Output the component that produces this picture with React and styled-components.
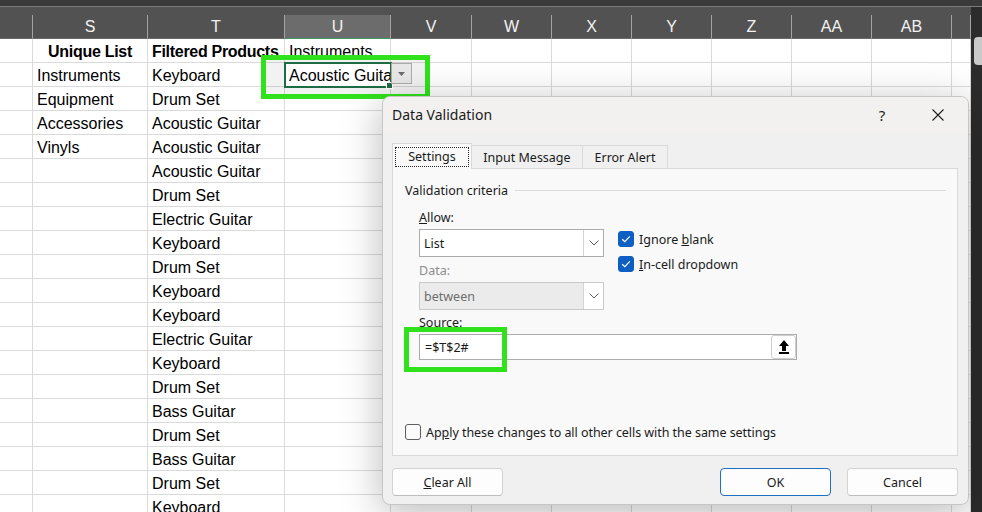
import styled, { createGlobalStyle } from "styled-components";

const COLUMNS = [
  { w: 33, label: "" },
  { w: 115, label: "S" },
  { w: 137, label: "T" },
  { w: 106, label: "U", active: true },
  { w: 81, label: "V" },
  { w: 80, label: "W" },
  { w: 80, label: "X" },
  { w: 80, label: "Y" },
  { w: 80, label: "Z" },
  { w: 80, label: "AA" },
  { w: 80, label: "AB" },
  { w: 19, label: "" },
];

const ROWS = [
  ["Unique List", "Filtered Products", "Instruments"],
  ["Instruments", "Keyboard", "Acoustic Guitar"],
  ["Equipment", "Drum Set", ""],
  ["Accessories", "Acoustic Guitar", ""],
  ["Vinyls", "Acoustic Guitar", ""],
  ["", "Acoustic Guitar", ""],
  ["", "Drum Set", ""],
  ["", "Electric Guitar", ""],
  ["", "Keyboard", ""],
  ["", "Drum Set", ""],
  ["", "Keyboard", ""],
  ["", "Keyboard", ""],
  ["", "Electric Guitar", ""],
  ["", "Keyboard", ""],
  ["", "Drum Set", ""],
  ["", "Bass Guitar", ""],
  ["", "Drum Set", ""],
  ["", "Bass Guitar", ""],
  ["", "Drum Set", ""],
  ["", "Keyboard", ""],
];

const GlobalStyle = createGlobalStyle`
  * { box-sizing: border-box; }
  body {
    margin: 0;
    overflow: hidden;
    background: #fff;
  }
`;

export default function App() {
  return (
    <>
      <GlobalStyle />
      <Page>
        <TopBand />
        <Workspace>
          <Sheet>
            <HeaderRow>
              {COLUMNS.map((c, i) => (
                <HeaderCell key={i} $w={c.w} $active={c.active}>
                  {c.label}
                </HeaderCell>
              ))}
            </HeaderRow>
            {ROWS.map((row, r) => (
              <Row key={r}>
                {COLUMNS.map((c, i) => {
                  let text = "";
                  if (i >= 1 && i <= 3) text = row[i - 1];
                  const bold = r === 0 && (i === 1 || i === 2);
                  return (
                    <Cell
                      key={i}
                      $w={c.w}
                      $bold={bold}
                      $center={r === 0 && i === 1}
                      $selected={r === 1 && i === 3}
                    >
                      {text}
                    </Cell>
                  );
                })}
              </Row>
            ))}
          </Sheet>
          <SideStrip>
            <StripThumb />
          </SideStrip>
        </Workspace>

        <Highlight style={{ left: 261, top: 55, width: 169, height: 44 }} $fill />
        <CellDrop>
          <svg width="7" height="4" viewBox="0 0 7 4">
            <path d="M0 0 L7 0 L3.5 4 Z" fill="#6b6b6b" />
          </svg>
        </CellDrop>

        <Dialog>
          <TitleBar>
            <Title>Data Validation</Title>
            <HelpBtn>?</HelpBtn>
            <CloseBtn>
              <svg width="12" height="12" viewBox="0 0 12 12">
                <path d="M0.5 0.5 L11.5 11.5 M11.5 0.5 L0.5 11.5" stroke="#1f1f1f" strokeWidth="1.1" />
              </svg>
            </CloseBtn>
          </TitleBar>
          <Body>
            <Tabs>
              <Tab $w={80} $active>Settings</Tab>
              <Tab $w={112}>Input Message</Tab>
              <Tab $w={86}>Error Alert</Tab>
            </Tabs>
            <Panel>
              <GroupHeader>Validation criteria</GroupHeader>
              <Criteria>
                <LeftCol>
                  <Label>
                    <u>A</u>llow:
                  </Label>
                  <Select>
                    <SelectText>List</SelectText>
                    <Chevron />
                  </Select>
                  <Label $disabled $gap={6}>Data:</Label>
                  <Select $disabled>
                    <SelectText>between</SelectText>
                    <Chevron />
                  </Select>
                </LeftCol>
                <RightCol>
                  <CheckRow>
                    <CheckBox $checked>
                      <CheckMark />
                    </CheckBox>
                    <span>
                      Ignore <u>b</u>lank
                    </span>
                  </CheckRow>
                  <CheckRow>
                    <CheckBox $checked>
                      <CheckMark />
                    </CheckBox>
                    <span>
                      <u>I</u>n-cell dropdown
                    </span>
                  </CheckRow>
                </RightCol>
              </Criteria>
              <SourceBlock>
                <Label $gap={5}>Source:</Label>
                <SourceInput>
                  <SelectText>=$T$2#</SelectText>
                  <CollapseBtn>
                    <svg width="10" height="14" viewBox="0 0 10 14">
                      <path d="M5 0 L10 6 L7 6 L7 11 L3 11 L3 6 L0 6 Z" fill="#000" />
                      <rect x="0" y="12" width="10" height="2" fill="#000" />
                    </svg>
                  </CollapseBtn>
                </SourceInput>
              </SourceBlock>
              <ApplyRow>
                <CheckBox />
                <span>
                  Ap<u>p</u>ly these changes to all other cells with the same settings
                </span>
              </ApplyRow>
            </Panel>
            <Footer>
              <Button>
                <u>C</u>lear All
              </Button>
              <ButtonGroup>
                <Button $primary>OK</Button>
                <Button>Cancel</Button>
              </ButtonGroup>
            </Footer>
          </Body>
          <Highlight style={{ left: 21, top: 230, width: 103, height: 45 }} />
        </Dialog>
      </Page>
    </>
  );
}

function Chevron() {
  return (
    <ChevronBox>
      <svg width="10" height="6" viewBox="0 0 10 6">
        <path d="M0.5 0.5 L5 5 L9.5 0.5" stroke="#5c5c5c" strokeWidth="1" fill="none" />
      </svg>
    </ChevronBox>
  );
}

function CheckMark() {
  return (
    <svg width="10" height="8" viewBox="0 0 10 8">
      <path d="M1.2 4.2 L3.8 6.6 L8.8 1.4" stroke="#fff" strokeWidth="1.2" fill="none" />
    </svg>
  );
}

const Page = styled.div`
  position: relative;
  width: 982px;
  height: 512px;
  overflow: hidden;
  background: #fff;
`;

const TopBand = styled.div`
  height: 7px;
  background: #3a3a3a;
  border-bottom: 1px solid #7c7c7c;
`;

const Workspace = styled.div`
  display: flex;
`;

const Sheet = styled.div`
  width: 971px;
  font-family: "Liberation Sans", Arial, sans-serif;
`;

const HeaderRow = styled.div`
  display: flex;
  height: 32px;
  background: #525252;
`;

const HeaderCell = styled.div`
  position: relative;
  width: ${(p) => p.$w}px;
  flex: none;
  margin-top: 8px;
  display: flex;
  align-items: center;
  justify-content: center;
  color: #f2f2f2;
  font-size: 16px;
  border-right: 1px solid #a3a3a3;
  background: ${(p) => (p.$active ? "#6c6c6c" : "transparent")};
  border-bottom: 1px solid ${(p) => (p.$active ? "#3f9a63" : "#6a6a6a")};
`;

const Row = styled.div`
  display: flex;
  height: 24px;
`;

const Cell = styled.div`
  position: relative;
  width: ${(p) => p.$w}px;
  flex: none;
  height: 24px;
  padding: 3px 4px 0;
  border-right: 1px solid #dadada;
  border-bottom: 1px solid #dadada;
  font-size: 16px;
  line-height: 20px;
  color: #000;
  white-space: nowrap;
  overflow: hidden;
  font-weight: ${(p) => (p.$bold ? 700 : 400)};
  letter-spacing: ${(p) => (p.$bold ? "-0.3px" : "0")};
  text-align: ${(p) => (p.$center ? "center" : "left")};
  ${(p) =>
    p.$selected &&
    `
    z-index: 3;
    overflow: visible;
    background: #fff;
    outline: 2px solid #1f6b43;
    outline-offset: -1px;
    &::after {
      content: "";
      position: absolute;
      right: -3px;
      bottom: -3px;
      width: 5px;
      height: 5px;
      background: #1f6b43;
      border: 1px solid #fff;
    }
  `}
`;

const SideStrip = styled.div`
  flex: 1;
  height: 505px;
  background: #2c2c2c;
  padding: 10px 0 0 3px;
`;

const StripThumb = styled.div`
  height: 28px;
  margin-top: 20px;
  border-radius: 4px 0 0 4px;
  background: #c9c9c9;
`;

const Highlight = styled.div`
  position: absolute;
  z-index: ${(p) => (p.$fill ? 2 : 5)};
  border: 5px solid #2fe21c;
  background: ${(p) => (p.$fill ? "rgba(0,0,0,0.05)" : "transparent")};
  pointer-events: none;
`;

const CellDrop = styled.div`
  position: absolute;
  z-index: 4;
  left: 391px;
  top: 63px;
  width: 21px;
  height: 21px;
  display: flex;
  align-items: center;
  justify-content: center;
  background: #e8e8e8;
  border: 1px solid #acacac;
`;

const Dialog = styled.div`
  position: absolute;
  z-index: 6;
  left: 382px;
  top: 96px;
  width: 587px;
  height: 409px;
  border: 1px solid #c6c6c6;
  border-radius: 8px;
  overflow: hidden;
  background: #f0f0f0;
  box-shadow: 0 8px 40px rgba(0, 0, 0, 0.28);
  font-family: "Noto Sans", "Open Sans", sans-serif;
  font-size: 12.5px;
  color: #1a1a1a;
`;

const TitleBar = styled.div`
  height: 37px;
  display: flex;
  align-items: center;
  padding: 0 0 2px 9px;
  background: #f3f1ef;
`;

const Title = styled.div`
  flex: 1;
  font-size: 14px;
  color: #1a1a1a;
`;

const HelpBtn = styled.div`
  width: 20px;
  margin-right: 23px;
  text-align: center;
  font-size: 15px;
  color: #222;
`;

const CloseBtn = styled.div`
  width: 46px;
  margin-right: 7px;
  display: flex;
  justify-content: center;
`;

const Body = styled.div`
  padding: 9px 10px 0 9px;
`;

const Tabs = styled.div`
  display: flex;
  align-items: flex-end;
  height: 25px;
`;

const Tab = styled.div`
  position: relative;
  z-index: ${(p) => (p.$active ? 2 : 1)};
  width: ${(p) => p.$w}px;
  height: ${(p) => (p.$active ? 26 : 23)}px;
  margin-bottom: ${(p) => (p.$active ? -1 : 0)}px;
  margin-left: ${(p) => (p.$active ? 0 : -1)}px;
  display: flex;
  align-items: center;
  justify-content: center;
  padding-bottom: ${(p) => (p.$active ? 1 : 0)}px;
  border: 1px solid #d9d9d9;
  border-bottom: none;
  background: ${(p) => (p.$active ? "#f9f9f9" : "#f0f0f0")};
  ${(p) =>
    p.$active &&
    `
    &::after {
      content: "";
      position: absolute;
      left: 2px;
      right: 2px;
      top: 3px;
      bottom: 2px;
      border: 1px dotted #222;
    }
  `}
`;

const Panel = styled.div`
  height: 288px;
  display: flex;
  flex-direction: column;
  padding: 12px 11px 15px 12px;
  border: 1px solid #d9d9d9;
  background: #f9f9f9;
`;

const GroupHeader = styled.div`
  display: flex;
  align-items: center;
  gap: 7px;
  height: 18px;
  &::after {
    content: "";
    flex: 1;
    height: 1px;
    background: #dcdcdc;
  }
`;

const Criteria = styled.div`
  display: flex;
  margin: 11px 0 0 14px;
  gap: 14px;
`;

const LeftCol = styled.div`
  width: 185px;
  display: flex;
  flex-direction: column;
`;

const RightCol = styled.div`
  display: flex;
  flex-direction: column;
  gap: 9px;
  padding-top: 21px;
`;

const Label = styled.div`
  height: 16px;
  line-height: 16px;
  margin-top: ${(p) => p.$gap || 0}px;
  margin-bottom: 3px;
  color: ${(p) => (p.$disabled ? "#8c8c8c" : "#1a1a1a")};
`;

const Select = styled.div`
  display: flex;
  height: 28px;
  border: 1px solid ${(p) => (p.$disabled ? "#c9c9c9" : "#acacac")};
  background: ${(p) => (p.$disabled ? "#ebebeb" : "#fff")};
  color: ${(p) => (p.$disabled ? "#6e6e6e" : "#1a1a1a")};
`;

const SelectText = styled.div`
  flex: 1;
  display: flex;
  align-items: center;
  padding-left: 4px;
`;

const ChevronBox = styled.div`
  width: 20px;
  display: flex;
  align-items: center;
  justify-content: center;
  background: #fff;
  border-left: 1px solid #d4d4d4;
`;

const CheckRow = styled.div`
  display: flex;
  align-items: center;
  gap: 5px;
  height: 16px;
`;

const CheckBox = styled.div`
  width: 16px;
  height: 16px;
  flex: none;
  display: flex;
  align-items: center;
  justify-content: center;
  border-radius: 3px;
  background: ${(p) => (p.$checked ? "#0f5fc3" : "#fbfbfb")};
  border: 1px solid ${(p) => (p.$checked ? "#0f5fc3" : "#5e5e5e")};
`;

const SourceBlock = styled.div`
  margin-left: 14px;
`;

const SourceInput = styled.div`
  display: flex;
  width: 378px;
  height: 26px;
  border: 1px solid #acacac;
  background: #fff;
  padding-left: 1px;
`;

const CollapseBtn = styled.div`
  width: 25px;
  height: 24px;
  display: flex;
  align-items: center;
  justify-content: center;
  border: 1px solid #cfcfcf;
  border-radius: 3px;
  background: #fff;
`;

const ApplyRow = styled.div`
  margin-top: auto;
  display: flex;
  align-items: center;
  gap: 5px;
  height: 16px;
  letter-spacing: -0.05px;
`;

const Footer = styled.div`
  display: flex;
  justify-content: space-between;
  margin-top: 12px;
`;

const ButtonGroup = styled.div`
  display: flex;
  gap: 16px;
`;

const Button = styled.div`
  width: 111px;
  height: 28px;
  display: flex;
  align-items: center;
  justify-content: center;
  border-radius: 4px;
  background: #fdfdfd;
  border: 1px solid ${(p) => (p.$primary ? "#1f6fc5" : "#d3d3d3")};
  border-bottom-color: ${(p) => (p.$primary ? "#1f6fc5" : "#bdbdbd")};
  font-size: 12.5px;
  color: #1a1a1a;
`;
